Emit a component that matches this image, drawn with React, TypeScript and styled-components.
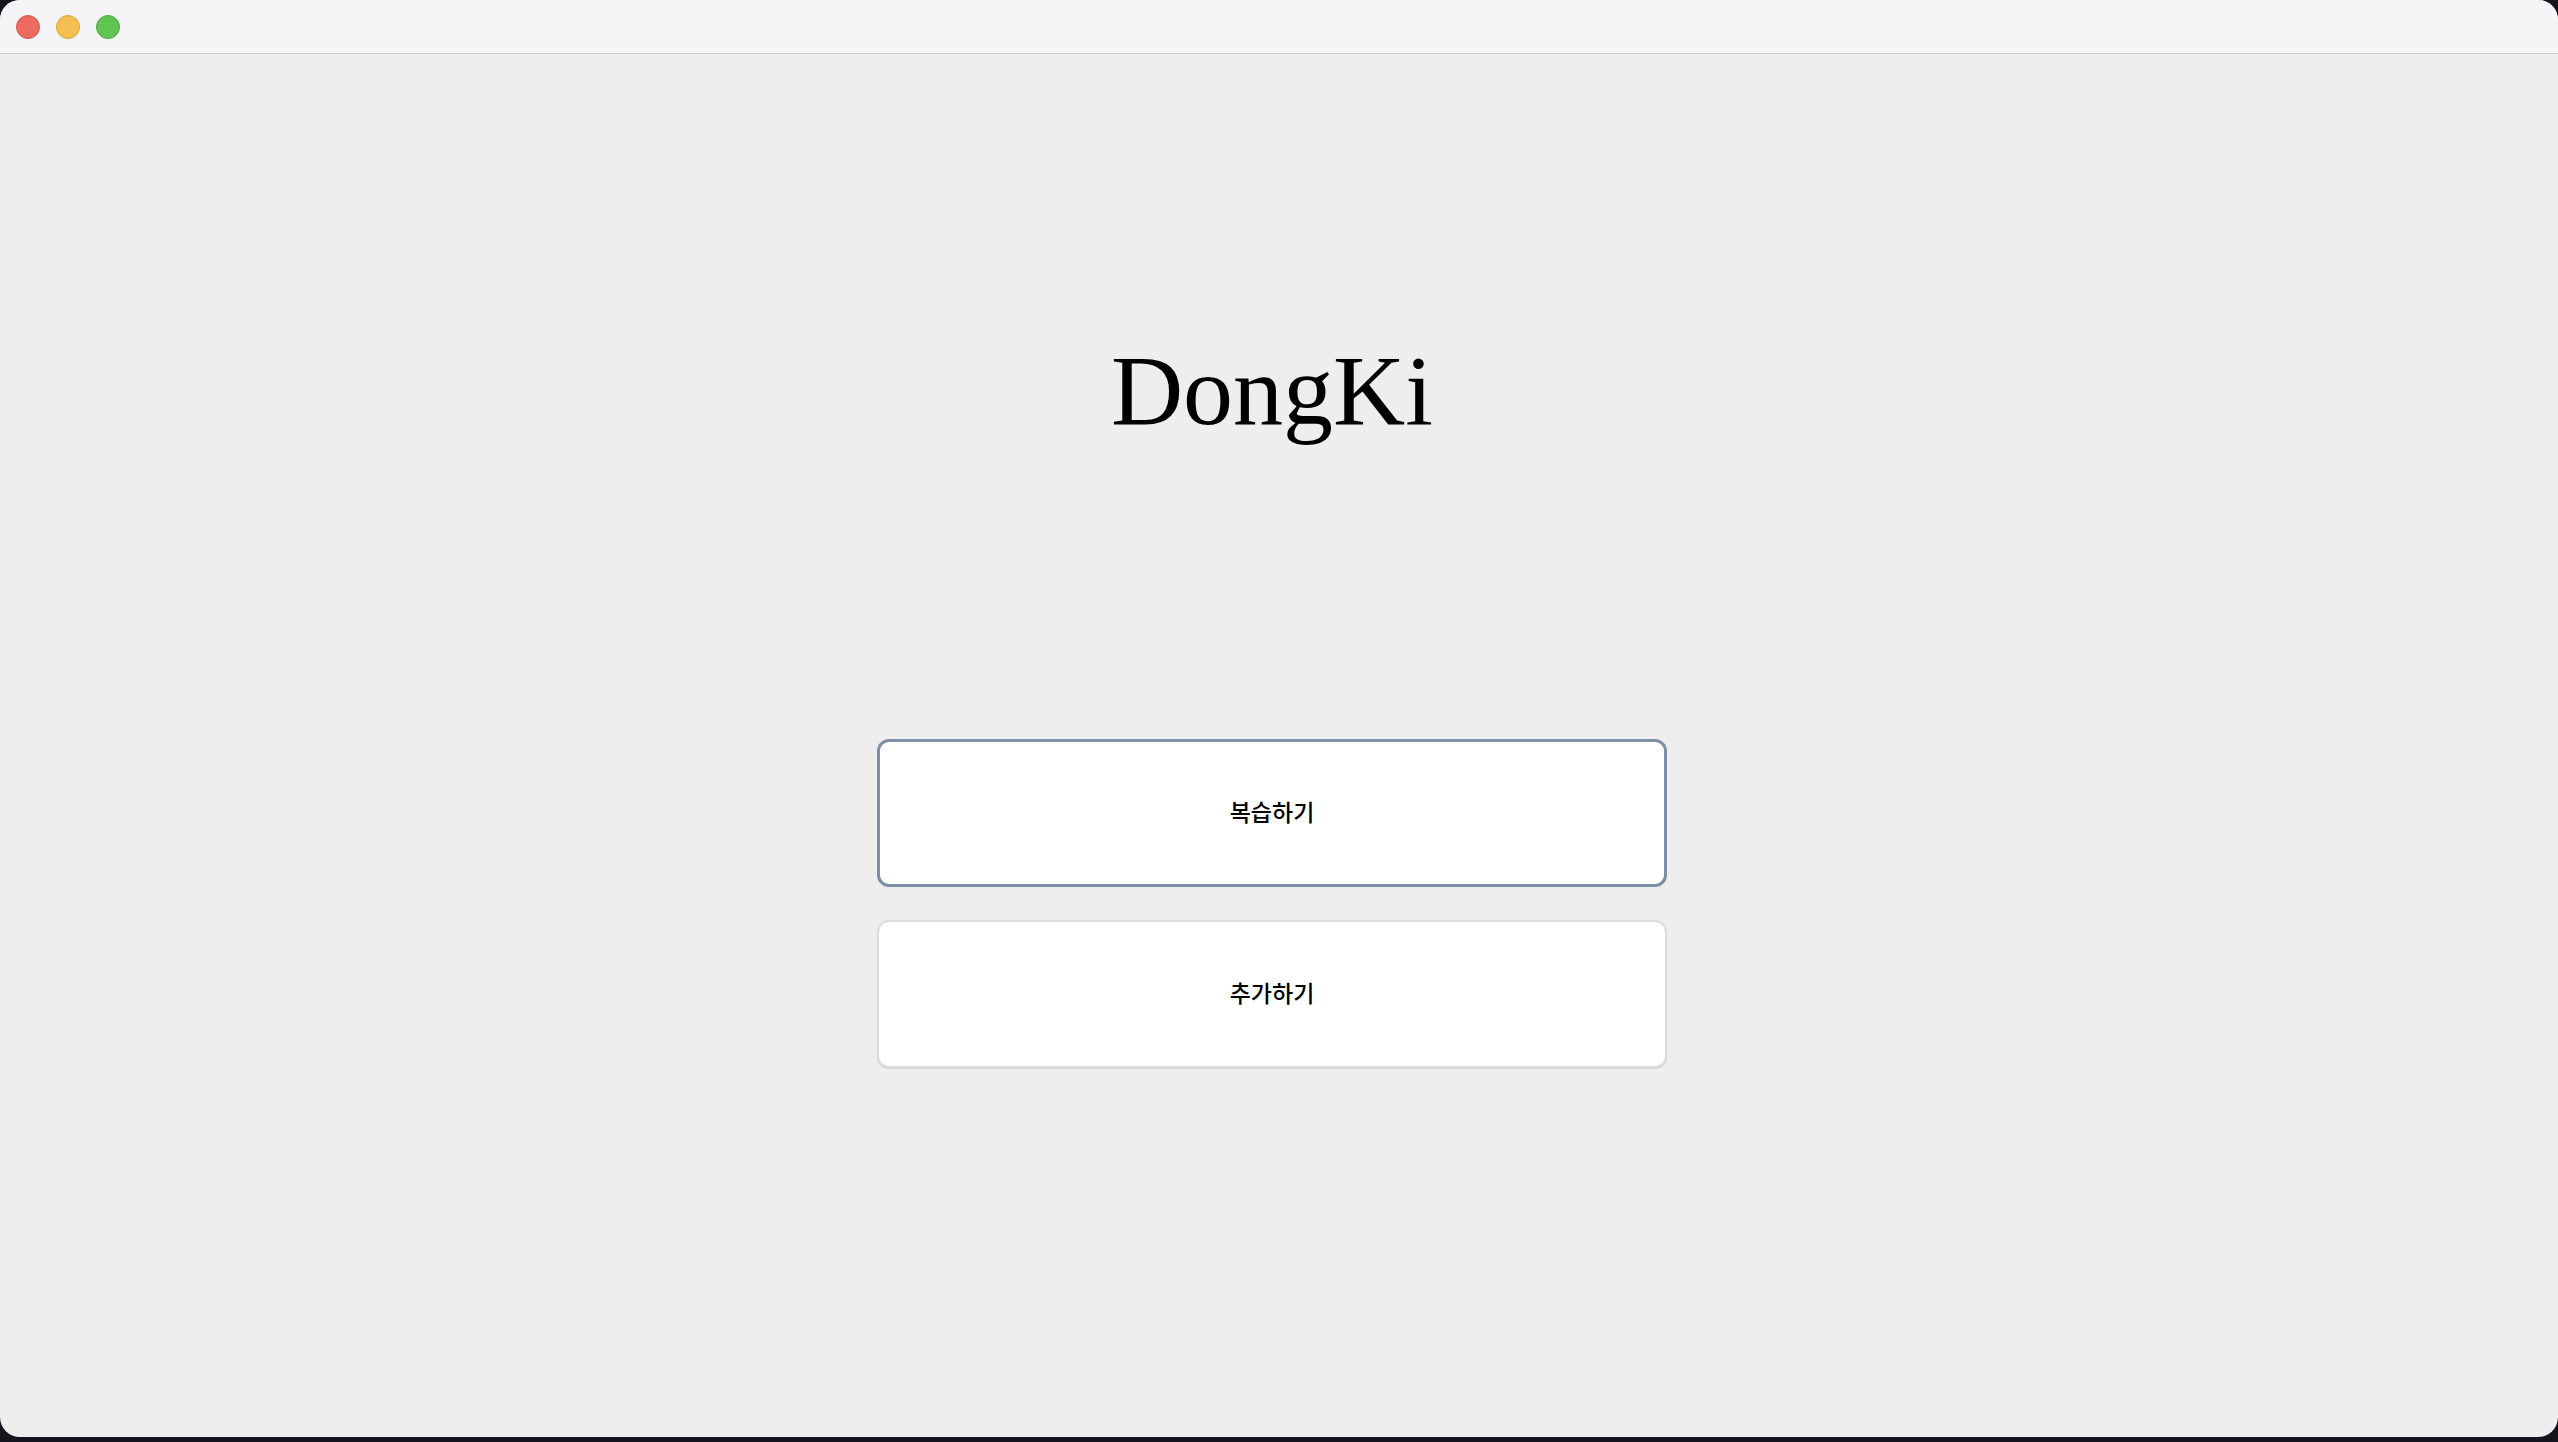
import * as React from 'react';
import styled, { createGlobalStyle } from 'styled-components';

const GlobalStyle = createGlobalStyle`
  html, body {
    margin: 0;
    padding: 0;
    background: #15161d;
  }
  #root {
    height: 1442px;
  }
`;

const Desktop = styled.div`
  height: 1442px;
  display: flex;
  flex-direction: column;
  background: #15161d;
`;

const Window = styled.div`
  height: 1437px;
  display: flex;
  flex-direction: column;
  border-radius: 20px;
  overflow: hidden;
  background: #eeeeee;
`;

const TitleBar = styled.div`
  height: 53px;
  flex: 0 0 auto;
  display: flex;
  align-items: center;
  gap: 16px;
  padding: 0 0 0 16px;
  background: #f5f4f7;
  border-bottom: 1px solid #cdcdcf;
`;

const Light = styled.span<{ $fill: string; $edge: string }>`
  width: 24px;
  height: 24px;
  border-radius: 50%;
  box-sizing: border-box;
  background: ${(p) => p.$fill};
  border: 1px solid ${(p) => p.$edge};
`;

const Content = styled.main`
  flex: 1 1 auto;
  display: flex;
  flex-direction: column;
  align-items: center;
  padding-right: 14px;
`;

const Title = styled.h1`
  margin: 287px 0 0;
  font-family: 'Liberation Serif', 'Times New Roman', serif;
  font-weight: 400;
  font-size: 100px;
  line-height: 100px;
  color: #000;
`;

const Menu = styled.div`
  margin-top: 298px;
  display: flex;
  flex-direction: column;
  gap: 33px;
`;

const MenuButton = styled.button<{ $focused?: boolean }>`
  width: 790px;
  height: 148px;
  box-sizing: border-box;
  background: #ffffff;
  border-radius: 12px;
  border: ${(p) => (p.$focused ? '3px solid #7f8fa6' : '2px solid #dcdcdc')};
  box-shadow: ${(p) => (p.$focused ? 'none' : '0 1px 1px rgba(0,0,0,0.12)')};
  font-family: 'Noto Sans CJK KR', 'Noto Sans', sans-serif;
  font-size: 23px;
  font-weight: 500;
  color: #000;
  cursor: pointer;
  padding: 0 0 5px;
`;

const App: React.FC = () => {
  return (
    <Desktop>
      <GlobalStyle />
      <Window>
        <TitleBar>
          <Light $fill="#ed6a5e" $edge="#d5584c" />
          <Light $fill="#f5bf4f" $edge="#d9a43a" />
          <Light $fill="#61c554" $edge="#4fa944" />
        </TitleBar>
        <Content>
          <Title>DongKi</Title>
          <Menu>
            <MenuButton $focused>복습하기</MenuButton>
            <MenuButton>추가하기</MenuButton>
          </Menu>
        </Content>
      </Window>
    </Desktop>
  );
};

export default App;
